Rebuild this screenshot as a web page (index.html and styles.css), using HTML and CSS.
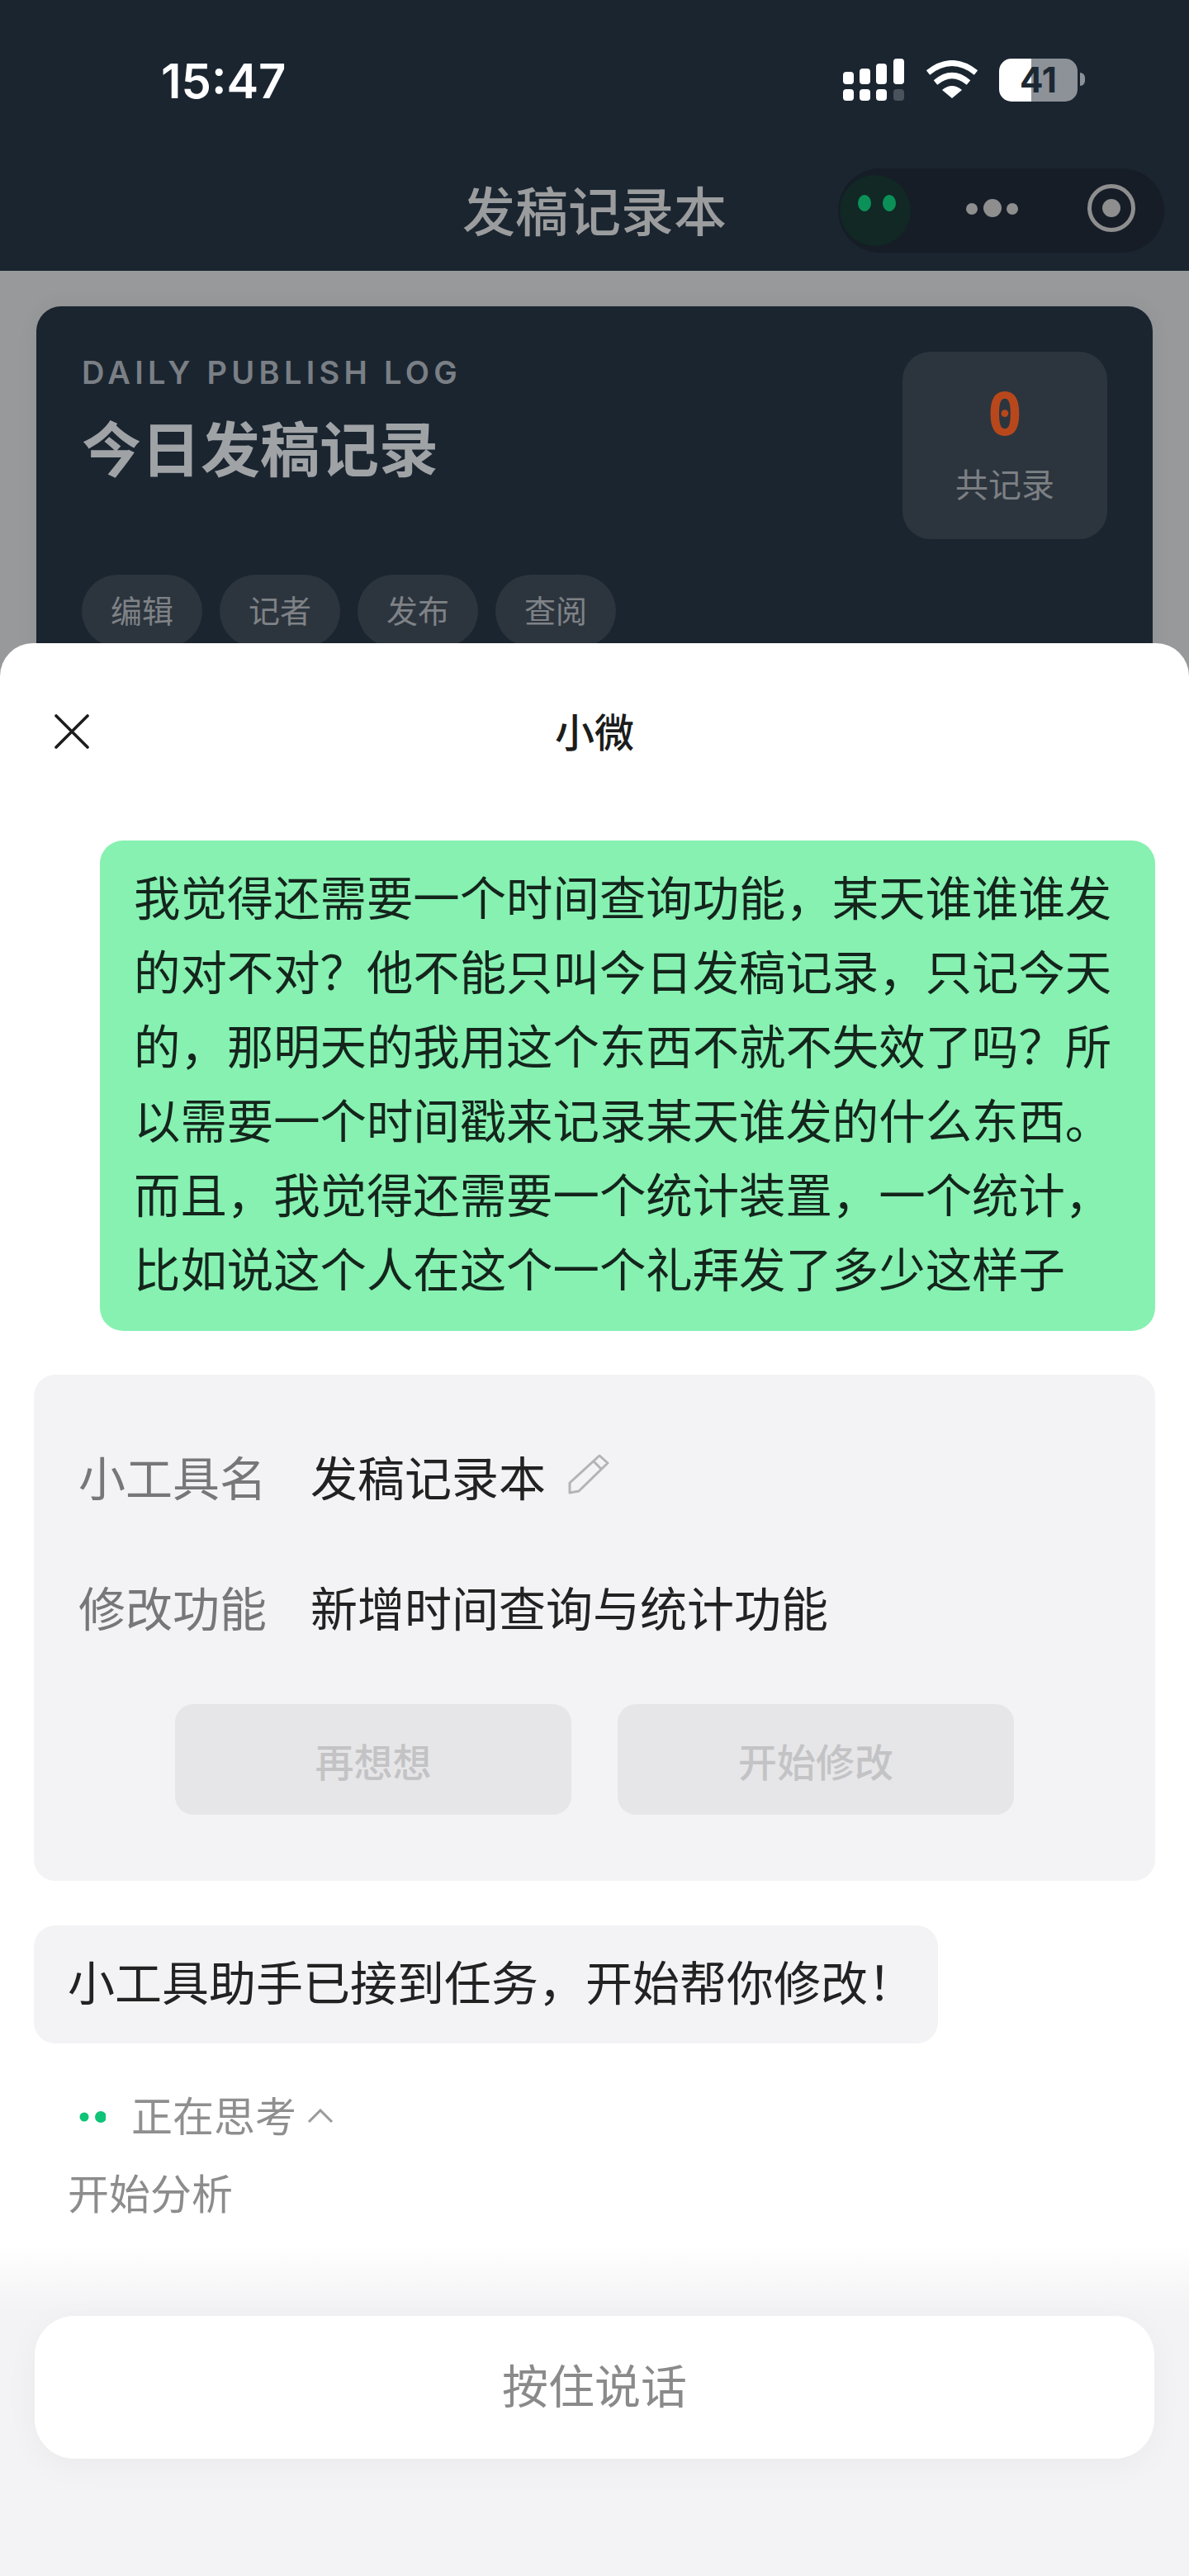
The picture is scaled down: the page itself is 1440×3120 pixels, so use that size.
FILE: index.html
```html
<!DOCTYPE html>
<html lang="zh-CN">
<head>
<meta charset="utf-8">
<title>发稿记录本</title>
<link rel="stylesheet" href="styles.css">
</head>
<body>
<div class="page">
  <header class="topbar">
    <div class="status">
      <span class="time">15:47</span>
      <div class="status-icons">
        <svg class="signal" width="74" height="52" viewBox="0 0 74 52" aria-hidden="true">
          <rect x="0" y="16" width="13" height="15" rx="4" fill="#fff"/>
          <rect x="20" y="12" width="13" height="19" rx="4" fill="#fff"/>
          <rect x="40" y="6" width="13" height="25" rx="4" fill="#fff"/>
          <rect x="61" y="0" width="13" height="31" rx="4" fill="#fff"/>
          <rect x="0" y="37" width="13" height="14" rx="4" fill="#fff"/>
          <rect x="20" y="37" width="13" height="14" rx="4" fill="#fff"/>
          <rect x="40" y="37" width="13" height="14" rx="4" fill="#fff"/>
          <rect x="61" y="37" width="13" height="14" rx="4" fill="#4a535b"/>
        </svg>
        <svg class="wifi" width="64" height="46" viewBox="0 0 64 46" aria-hidden="true">
          <path d="M3 15 Q32 -8 61 15" fill="none" stroke="#fff" stroke-width="7"/>
          <path d="M12 27 Q32 10 52 27" fill="none" stroke="#fff" stroke-width="7"/>
          <path d="M20 36 Q32 26 44 36 L32 46 Z" fill="#fff"/>
        </svg>
        <div class="battery"><span>41</span></div>
      </div>
    </div>
    <nav class="navbar">
      <span></span>
      <h1 class="nav-title">发稿记录本</h1>
      <div class="capsule">
        <svg width="395" height="102" viewBox="0 0 395 102" aria-hidden="true">
          <circle cx="45" cy="51" r="43" fill="#112825"/>
          <ellipse cx="32" cy="42" rx="8" ry="10" fill="#0b9158"/>
          <ellipse cx="62" cy="42" rx="8" ry="10" fill="#0b9158"/>
          <circle cx="162" cy="49" r="7" fill="#8e8e8e"/>
          <circle cx="187" cy="48" r="11" fill="#8e8e8e"/>
          <circle cx="211" cy="49" r="7" fill="#8e8e8e"/>
          <circle cx="331" cy="48" r="26.5" fill="none" stroke="#8e8e8e" stroke-width="5"/>
          <circle cx="331" cy="48" r="11" fill="#8e8e8e"/>
        </svg>
      </div>
    </nav>
  </header>

  <main class="backdrop">
    <section class="log-card">
      <div class="log-head">
        <div class="log-intro">
          <p class="eyebrow">DAILY PUBLISH LOG</p>
          <h2 class="log-title">今日发稿记录</h2>
        </div>
        <div class="stat">
          <span class="stat-num">0</span>
          <span class="stat-label">共记录</span>
        </div>
      </div>
      <div class="pills">
        <span class="pill">编辑</span>
        <span class="pill">记者</span>
        <span class="pill">发布</span>
        <span class="pill">查阅</span>
      </div>
    </section>
  </main>

  <section class="sheet">
    <div class="sheet-head">
      <svg class="close" width="42" height="42" viewBox="0 0 42 42" aria-hidden="true">
        <path d="M2 2 L40 40 M40 2 L2 40" stroke="#1c1c1c" stroke-width="3.6" stroke-linecap="round"/>
      </svg>
      <h2 class="sheet-title">小微</h2>
      <span></span>
    </div>

    <div class="messages">
      <div class="bubble-user">我觉得还需要一个时间查询功能，某天谁谁谁发的对不对？他不能只叫今日发稿记录，只记今天的，那明天的我用这个东西不就不失效了吗？所以需要一个时间戳来记录某天谁发的什么东西。而且，我觉得还需要一个统计装置，一个统计，比如说这个人在这个一个礼拜发了多少这样子</div>

      <div class="form-card">
        <div class="form-row">
          <span class="form-label">小工具名</span>
          <span class="form-value">发稿记录本</span>
          <svg class="pencil" width="50" height="50" viewBox="0 0 50 50" aria-hidden="true">
            <path d="M2 36 L38 3 L48 12 L13 46 L2 48 Z M31 10 L41 20" fill="none" stroke="#b4b4b6" stroke-width="3" stroke-linejoin="round"/>
          </svg>
        </div>
        <div class="form-row">
          <span class="form-label">修改功能</span>
          <span class="form-value">新增时间查询与统计功能</span>
        </div>
        <div class="form-actions">
          <button class="form-btn" type="button">再想想</button>
          <button class="form-btn" type="button">开始修改</button>
        </div>
      </div>

      <div class="bubble-bot">小工具助手已接到任务，开始帮你修改！</div>

      <div class="thinking">
        <svg class="dots" width="32" height="16" viewBox="0 0 32 16" aria-hidden="true">
          <circle cx="6" cy="8" r="5.5" fill="#0fc377"/>
          <circle cx="26" cy="8" r="7" fill="#0fc377"/>
        </svg>
        <span>正在思考</span>
        <svg class="chevron" width="32" height="18" viewBox="0 0 32 18" aria-hidden="true">
          <path d="M2 16 L16 2 L30 16" fill="none" stroke="#9a9a9a" stroke-width="3"/>
        </svg>
      </div>
      <p class="analysis">开始分析</p>
    </div>

    <div class="composer">
      <div class="voice">按住说话</div>
    </div>
  </section>
</div>
</body>
</html>
```

FILE: styles.css
```css
* { box-sizing: border-box; margin: 0; padding: 0; }
html, body { width: 1440px; height: 3120px; overflow: hidden; }
body {
  font-family: Inter, "Noto Sans CJK SC", sans-serif;
  background: #97999b;
}
.page {
  position: relative;
  width: 1440px;
  height: 3120px;
  overflow: hidden;
  display: flex;
  flex-direction: column;
  background: #97999b;
}

/* top bar */
.topbar {
  height: 328px;
  background: #1a2530;
  flex: none;
  box-shadow: 0 2px 4px rgba(0, 0, 0, .12);
}
.status {
  height: 182px;
  padding: 64px 135px 0 195px;
  display: flex;
  justify-content: space-between;
  align-items: flex-start;
}
.time {
  font-size: 58px;
  line-height: 68px;
  font-weight: 600;
  color: #fff;
}
.status-icons {
  display: flex;
  align-items: flex-start;
  padding-top: 7px;
}
.wifi { margin: 2px 25px 0 26px; }
.battery {
  position: relative;
  width: 95px;
  height: 52px;
  border-radius: 15px;
  background: linear-gradient(90deg, #fff 41%, #8d9298 41%);
  display: flex;
  align-items: center;
  justify-content: center;
  color: #1c2833;
  font-size: 42px;
  line-height: 52px;
  font-weight: 700;
}
.battery::after {
  content: "";
  position: absolute;
  left: 98px;
  top: 17px;
  width: 6px;
  height: 16px;
  border-radius: 0 6px 6px 0;
  background: #8d9298;
}
.navbar {
  height: 146px;
  display: grid;
  grid-template-columns: 1fr auto 1fr;
  align-items: center;
}
.nav-title {
  padding-top: 3px;
  font-size: 64px;
  line-height: 90px;
  font-weight: 500;
  color: #9b9c9d;
}
.capsule {
  justify-self: end;
  margin-right: 30px;
  width: 395px;
  height: 102px;
  border-radius: 51px;
  background: #161d27;
  overflow: hidden;
}
.capsule svg { display: block; }

/* dimmed page behind the sheet */
.backdrop {
  flex: 1;
  padding: 43px 44px 0;
  background: #97999b;
}
.log-card {
  height: 700px;
  padding: 55px 55px 0;
  background: #1a2530;
  border-radius: 30px;
  box-shadow: 0 0 24px rgba(0, 0, 0, .06);
}
.log-head {
  display: flex;
  justify-content: space-between;
  align-items: flex-start;
}
.log-intro { padding-top: 7px; }
.eyebrow {
  font-size: 38px;
  line-height: 36px;
  font-weight: 600;
  letter-spacing: 5.3px;
  color: #7a7f85;
}
.log-title {
  margin-top: 31px;
  font-size: 72px;
  line-height: 90px;
  font-weight: 700;
  color: #a0a3a6;
}
.stat {
  width: 248px;
  height: 227px;
  padding-top: 40px;
  border-radius: 34px;
  background: #2c353e;
  display: flex;
  flex-direction: column;
  align-items: center;
}
.stat-num {
  font-family: "DejaVu Sans Mono", monospace;
  font-size: 72px;
  line-height: 72px;
  font-weight: 700;
  color: #b8481c;
}
.stat-label {
  margin-top: 24px;
  font-size: 40px;
  line-height: 52px;
  color: #7c8084;
}
.pills {
  margin-top: 43px;
  display: flex;
  gap: 21px;
}
.pill {
  width: 146px;
  height: 88px;
  border-radius: 44px;
  background: #2c353e;
  color: #7f8286;
  font-size: 38px;
  line-height: 88px;
  text-align: center;
}

/* bottom sheet */
.sheet {
  position: absolute;
  left: 0;
  right: 0;
  top: 779px;
  bottom: 0;
  background: #fff;
  border-radius: 40px 40px 0 0;
  display: flex;
  flex-direction: column;
}
.sheet-head {
  flex: none;
  height: 218px;
  display: grid;
  grid-template-columns: 1fr auto 1fr;
  align-items: center;
}
.close { margin: -4px 0 0 66px; }
.sheet-title {
  font-size: 48px;
  line-height: 64px;
  font-weight: 500;
  color: #1c1c1c;
}
.messages {
  padding: 21px 41px 0 41px;
  display: flex;
  flex-direction: column;
  align-items: flex-start;
}
.bubble-user {
  align-self: flex-end;
  width: 1278px;
  padding: 26px 50px 28px 41px;
  border-radius: 28px;
  background: #86f1b1;
  color: #14251c;
  font-size: 56.4px;
  line-height: 90px;
}
.form-card {
  width: 1358px;
  height: 613px;
  margin-top: 53px;
  padding: 77px 54px 0;
  border-radius: 26px;
  background: #f3f3f5;
}
.form-row {
  display: flex;
  align-items: center;
  height: 90px;
  font-size: 57px;
}
.form-row + .form-row { margin-top: 68px; }
.form-label { width: 281px; color: #77777a; }
.form-value { color: #222; }
.pencil { margin-left: 27px; margin-top: -4px; }
.form-actions {
  margin-top: 74px;
  display: flex;
  justify-content: center;
  gap: 56px;
}
.form-btn {
  width: 480px;
  height: 134px;
  border: 0;
  border-radius: 22px;
  background: #e6e6e8;
  color: #c3c3c5;
  font-family: inherit;
  font-size: 47px;
  font-weight: 500;
}
.bubble-bot {
  margin-top: 54px;
  width: 1095px;
  height: 143px;
  padding: 26px 0 26px 41px;
  border-radius: 26px;
  background: #f3f3f5;
  color: #222;
  font-size: 57px;
  line-height: 90px;
  white-space: nowrap;
}
.thinking {
  margin: 50px 0 0 55px;
  display: flex;
  align-items: center;
  height: 70px;
  color: #8f8f8f;
  font-size: 50px;
}
.dots { margin-right: 31px; margin-top: 8px; }
.chevron { margin: 5px 0 0 13px; }
.analysis {
  margin: 28px 0 0 41px;
  color: #8c8c8c;
  font-size: 50px;
  line-height: 70px;
}
.composer {
  margin-top: auto;
  height: 402px;
  padding: 87px 42px 0;
  background: linear-gradient(180deg, #fff 0, #f3f3f5 80px);
}
.voice {
  height: 173px;
  border-radius: 48px;
  background: #fff;
  color: #8a8a8a;
  font-size: 56px;
  line-height: 173px;
  text-align: center;
  box-shadow: 0 8px 40px rgba(0, 0, 0, .04);
}
```
